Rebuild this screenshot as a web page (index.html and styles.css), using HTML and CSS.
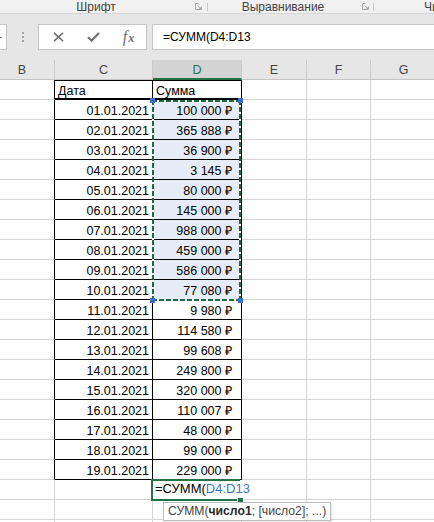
FILE: index.html
```html
<!DOCTYPE html>
<html lang="ru">
<head>
<meta charset="utf-8">
<title>Excel</title>
<link rel="stylesheet" href="styles.css">
</head>
<body>
<div class="app">
  <div class="ribbon">
    <div class="grp g1">
      <span class="glabel">Шрифт</span>
      <svg class="launch" viewBox="0 0 7 7"><path d="M0.5 6.5V0.5H3.5M0.5 6.5H6.5V3.5M2.5 2.5L6 6M4 6H6V4" fill="none" stroke="#a8a8a8" stroke-width="1"/></svg>
      <span class="gsep"></span>
    </div>
    <div class="grp g2">
      <span class="glabel">Выравнивание</span>
      <svg class="launch" viewBox="0 0 7 7"><path d="M0.5 6.5V0.5H3.5M0.5 6.5H6.5V3.5M2.5 2.5L6 6M4 6H6V4" fill="none" stroke="#a8a8a8" stroke-width="1"/></svg>
      <span class="gsep"></span>
    </div>
    <div class="grp g3"><span class="glabel">Число</span></div>
  </div>

  <div class="fbar">
    <div class="namebox"><span class="nb-mark"></span></div>
    <div class="grip"><i></i><i></i><i></i></div>
    <div class="fbtns">
      <span class="fbtn"><svg width="11" height="10" viewBox="0 0 11 10"><path d="M1 0.8L10 9.2M10 0.8L1 9.2" stroke="#727272" stroke-width="1.6" fill="none"/></svg></span>
      <span class="fbtn"><svg width="13" height="10" viewBox="0 0 13 10"><path d="M1 5.2L4.6 8.6L12 1" stroke="#727272" stroke-width="2.2" fill="none"/></svg></span>
      <span class="fbtn fx"><span class="fx-f">f</span><span class="fx-x">x</span></span>
    </div>
    <div class="finput">=СУММ(D4:D13</div>
  </div>

  <div class="sheet">
    <div class="grid">
      <div class="r hdr">
        <div class="c">B</div><div class="c">C</div><div class="c on">D</div><div class="c">E</div><div class="c">F</div><div class="c">G</div><div class="c"></div>
      </div>
      <div class="r t t1">
        <div class="c"></div><div class="c">Дата</div><div class="c">Сумма</div><div class="c"></div><div class="c"></div><div class="c"></div><div class="c"></div>
      </div>
      <div class="r t"><div class="c"></div><div class="c num">01.01.2021</div><div class="c num amt sel">100&nbsp;000&nbsp;₽</div><div class="c"></div><div class="c"></div><div class="c"></div><div class="c"></div></div>
      <div class="r t"><div class="c"></div><div class="c num">02.01.2021</div><div class="c num amt sel">365&nbsp;888&nbsp;₽</div><div class="c"></div><div class="c"></div><div class="c"></div><div class="c"></div></div>
      <div class="r t"><div class="c"></div><div class="c num">03.01.2021</div><div class="c num amt sel">36&nbsp;900&nbsp;₽</div><div class="c"></div><div class="c"></div><div class="c"></div><div class="c"></div></div>
      <div class="r t"><div class="c"></div><div class="c num">04.01.2021</div><div class="c num amt sel">3&nbsp;145&nbsp;₽</div><div class="c"></div><div class="c"></div><div class="c"></div><div class="c"></div></div>
      <div class="r t"><div class="c"></div><div class="c num">05.01.2021</div><div class="c num amt sel">80&nbsp;000&nbsp;₽</div><div class="c"></div><div class="c"></div><div class="c"></div><div class="c"></div></div>
      <div class="r t"><div class="c"></div><div class="c num">06.01.2021</div><div class="c num amt sel">145&nbsp;000&nbsp;₽</div><div class="c"></div><div class="c"></div><div class="c"></div><div class="c"></div></div>
      <div class="r t"><div class="c"></div><div class="c num">07.01.2021</div><div class="c num amt sel">988&nbsp;000&nbsp;₽</div><div class="c"></div><div class="c"></div><div class="c"></div><div class="c"></div></div>
      <div class="r t"><div class="c"></div><div class="c num">08.01.2021</div><div class="c num amt sel">459&nbsp;000&nbsp;₽</div><div class="c"></div><div class="c"></div><div class="c"></div><div class="c"></div></div>
      <div class="r t"><div class="c"></div><div class="c num">09.01.2021</div><div class="c num amt sel">586&nbsp;000&nbsp;₽</div><div class="c"></div><div class="c"></div><div class="c"></div><div class="c"></div></div>
      <div class="r t"><div class="c"></div><div class="c num">10.01.2021</div><div class="c num amt sel">77&nbsp;080&nbsp;₽</div><div class="c"></div><div class="c"></div><div class="c"></div><div class="c"></div></div>
      <div class="r t"><div class="c"></div><div class="c num">11.01.2021</div><div class="c num amt">9&nbsp;980&nbsp;₽</div><div class="c"></div><div class="c"></div><div class="c"></div><div class="c"></div></div>
      <div class="r t"><div class="c"></div><div class="c num">12.01.2021</div><div class="c num amt">114&nbsp;580&nbsp;₽</div><div class="c"></div><div class="c"></div><div class="c"></div><div class="c"></div></div>
      <div class="r t"><div class="c"></div><div class="c num">13.01.2021</div><div class="c num amt">99&nbsp;608&nbsp;₽</div><div class="c"></div><div class="c"></div><div class="c"></div><div class="c"></div></div>
      <div class="r t"><div class="c"></div><div class="c num">14.01.2021</div><div class="c num amt">249&nbsp;800&nbsp;₽</div><div class="c"></div><div class="c"></div><div class="c"></div><div class="c"></div></div>
      <div class="r t"><div class="c"></div><div class="c num">15.01.2021</div><div class="c num amt">320&nbsp;000&nbsp;₽</div><div class="c"></div><div class="c"></div><div class="c"></div><div class="c"></div></div>
      <div class="r t"><div class="c"></div><div class="c num">16.01.2021</div><div class="c num amt">110&nbsp;007&nbsp;₽</div><div class="c"></div><div class="c"></div><div class="c"></div><div class="c"></div></div>
      <div class="r t"><div class="c"></div><div class="c num">17.01.2021</div><div class="c num amt">48&nbsp;000&nbsp;₽</div><div class="c"></div><div class="c"></div><div class="c"></div><div class="c"></div></div>
      <div class="r t"><div class="c"></div><div class="c num">18.01.2021</div><div class="c num amt">99&nbsp;000&nbsp;₽</div><div class="c"></div><div class="c"></div><div class="c"></div><div class="c"></div></div>
      <div class="r t"><div class="c"></div><div class="c num">19.01.2021</div><div class="c num amt">229&nbsp;000&nbsp;₽</div><div class="c"></div><div class="c"></div><div class="c"></div><div class="c"></div></div>
      <div class="r edit"><div class="c"></div><div class="c"></div><div class="c etext">=СУММ(<span class="ref">D4:D13</span></div><div class="c"></div><div class="c"></div><div class="c"></div><div class="c"></div></div>
      <div class="r"><div class="c"></div><div class="c"></div><div class="c"></div><div class="c"></div><div class="c"></div><div class="c"></div><div class="c"></div></div>
      <div class="r"><div class="c"></div><div class="c"></div><div class="c"></div><div class="c"></div><div class="c"></div><div class="c"></div><div class="c"></div></div>
    </div>

    <div class="ants">
      <i class="hd tl"></i><i class="hd tr"></i><i class="hd bl"></i><i class="hd br"></i>
    </div>
    <div class="editbox"></div>
    <div class="fillh"></div>
    <div class="tip">СУММ(<b>число1</b>; [число2]; ...)</div>
  </div>
</div>
</body>
</html>
```
FILE: styles.css
```css
html, body {
  margin: 0;
  padding: 0;
}
body {
  width: 434px;
  height: 522px;
  overflow: hidden;
  background: #fff;
  font-family: "Liberation Sans", Arial, sans-serif;
}
.app {
  width: 434px;
  height: 522px;
  overflow: hidden;
}

/* ribbon group labels */
.ribbon {
  display: flex;
  height: 13px;
  background: #f0f0f0;
  border-bottom: 1px solid #d6d6d6;
  font-size: 12px;
  line-height: 12px;
  color: #444;
  white-space: nowrap;
  overflow: hidden;
}
.grp {
  display: flex;
  align-items: center;
  flex-shrink: 0;
}
.g1 .glabel { width: 192px; text-align: center; }
.g1 .launch { margin-left: 3px; }
.g1 .gsep { margin-left: 5px; }
.g2 .glabel { width: 150px; text-align: center; }
.g2 .launch { margin-left: 4px; }
.g2 .gsep { margin-left: 4px; }
.g3 { padding-left: 50px; }
.launch {
  width: 7px;
  height: 7px;
  display: block;
}
.gsep {
  width: 1px;
  height: 8px;
  background: #c8c8c8;
}

/* formula bar */
.fbar {
  display: flex;
  align-items: flex-start;
  height: 46px;
  box-sizing: border-box;
  padding-top: 10px;
  background: #e6e6e6;
}
.namebox {
  position: relative;
  width: 8px;
  height: 26px;
  box-sizing: border-box;
  margin-left: -1px;
  background: #fff;
  border: 1px solid #c6c6c6;
  flex-shrink: 0;
}
.nb-mark {
  position: absolute;
  left: 0;
  top: 12px;
  width: 2px;
  height: 1px;
  background: #666;
}
.grip {
  display: flex;
  flex-direction: column;
  gap: 2px;
  margin-left: 15px;
  margin-top: 8px;
}
.grip i {
  display: block;
  width: 2px;
  height: 2px;
  background: #a3a3a3;
}
.fbtns {
  display: flex;
  margin-left: 14px;
  width: 109px;
  height: 26px;
  box-sizing: border-box;
  padding-left: 2px;
  background: #fff;
  border: 1px solid #c6c6c6;
  flex-shrink: 0;
}
.fbtn {
  width: 35px;
  height: 24px;
  display: flex;
  align-items: center;
  justify-content: center;
}
.fbtn svg { display: block; }
.fx {
  font-family: "Liberation Serif", "Times New Roman", serif;
  font-style: italic;
  color: #6e6e6e;
  align-items: baseline;
  padding-top: 2px;
  box-sizing: border-box;
}
.fx-f {
  font-size: 16px;
  line-height: 20px;
}
.fx-x {
  font-size: 12px;
  font-weight: bold;
  margin-left: 1px;
}
.finput {
  flex: 1;
  margin-left: 5px;
  margin-right: -3px;
  height: 26px;
  box-sizing: border-box;
  padding-left: 10px;
  background: #fff;
  border: 1px solid #c6c6c6;
  font-size: 12px;
  line-height: 24px;
  color: #000;
  white-space: nowrap;
}

/* sheet */
.sheet {
  position: relative;
  height: 462px;
  overflow: hidden;
}
.grid {
  margin-left: -10px;
}
.r {
  display: grid;
  grid-template-columns: 65px 98px 89px 65px 64px 66px 40px;
  height: 20px;
}
.c {
  box-sizing: border-box;
  height: 20px;
  padding: 2px 3px 0;
  border-right: 1px solid #d4d4d4;
  border-bottom: 1px solid #d4d4d4;
  font-size: 12.5px;
  line-height: 19px;
  color: #000;
  white-space: nowrap;
}
.num { text-align: right; }
.amt { padding-right: 9px; }
.sel { background: #e6edf8; }

/* column headers */
.hdr .c {
  background: #e6e6e6;
  border-right-color: #cbcbcb;
  border-bottom-color: #c4c4c4;
  text-align: center;
  color: #444;
  padding-top: 1px;
}
.hdr .c.on {
  background: #d3d3d3;
  border-bottom: 2px solid #217346;
  color: #217346;
}

/* table borders */
.t .c:nth-child(1) { border-right-color: #000; }
.t .c:nth-child(2),
.t .c:nth-child(3) {
  border-right-color: #000;
  border-bottom-color: #000;
}
.t1 .c:nth-child(2),
.t1 .c:nth-child(3) {
  border-bottom-width: 2px;
  box-shadow: inset 0 1px 0 #000;
}

/* cell in edit mode */
.edit .etext {
  position: relative;
  z-index: 1;
  overflow: visible;
  padding: 0 0 0 2px;
  font-size: 13px;
  line-height: 17px;
  border-right-color: transparent;
}
.ref { color: #3b78c0; }

.editbox {
  position: absolute;
  left: 151px;
  top: 419px;
  width: 89px;
  height: 22px;
  box-sizing: border-box;
  border: 2px solid #217346;
  border-right: 0;
  z-index: 2;
}
.fillh {
  position: absolute;
  left: 237px;
  top: 437px;
  width: 5px;
  height: 5px;
  background: #217346;
  border: 1px solid #fff;
  z-index: 3;
}

/* copy / reference marquee */
.ants {
  position: absolute;
  left: 152px;
  top: 40px;
  width: 89px;
  height: 201px;
  background:
    repeating-linear-gradient(90deg, #1f6b40 0 5px, #fff 5px 7px) left top / 100% 2px no-repeat,
    repeating-linear-gradient(90deg, #1f6b40 0 5px, #fff 5px 7px) left bottom / 100% 2px no-repeat,
    repeating-linear-gradient(180deg, #1f6b40 0 5px, #fff 5px 7px) left top / 2px 100% no-repeat,
    repeating-linear-gradient(180deg, #1f6b40 0 5px, #fff 5px 7px) right top / 2px 100% no-repeat;
}
.hd {
  position: absolute;
  width: 5px;
  height: 5px;
  background: #3b6fc1;
}
.hd.tl { left: -2px; top: -2px; }
.hd.tr { left: 86px; top: -2px; }
.hd.bl { left: -2px; top: 198px; }
.hd.br { left: 86px; top: 198px; }

/* function tooltip */
.tip {
  position: absolute;
  left: 163px;
  top: 442px;
  height: 17px;
  padding: 0 4px 0 4px;
  background: #fff;
  border: 1px solid #bdbdbd;
  box-shadow: 1px 1px 2px rgba(0, 0, 0, 0.12);
  font-size: 12.2px;
  line-height: 16px;
  color: #444;
  white-space: nowrap;
  z-index: 4;
}
.tip b { color: #2a2a2a; }
```
